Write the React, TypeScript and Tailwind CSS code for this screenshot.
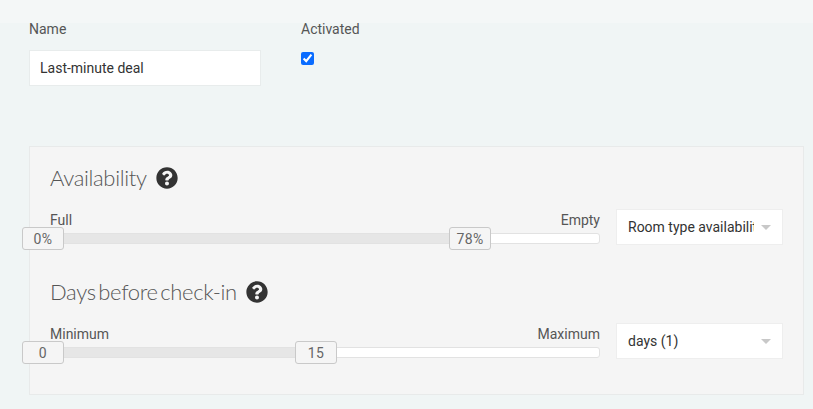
import { FaQuestionCircle } from "react-icons/fa";

const roboto = "font-['Roboto',sans-serif]";

function Handle({ label, left }: { label: string; left: number }) {
  return (
    <div
      className="absolute top-[-7px] flex h-[23px] w-[42px] items-center justify-center rounded-[3px] border border-[#c9c9c9] bg-[#f5f5f5] pt-[1px] text-[14px] tracking-[0.4px] text-[#666]"
      style={{ left }}
    >
      {label}
    </div>
  );
}

function SliderRow({
  title,
  min,
  max,
  from,
  to,
  toLeft,
  select,
}: {
  title: string;
  min: string;
  max: string;
  from: string;
  to: string;
  toLeft: number;
  select: string;
}) {
  return (
    <div>
      <div className="flex h-[24px] items-center gap-[9px]">
        <h3 className="font-['Lato',sans-serif] text-[22px] leading-none font-light tracking-[-0.35px] [word-spacing:-3px] text-[#555]">
          {title}
        </h3>
        <FaQuestionCircle className="h-[22px] w-[22px] text-[#333]" />
      </div>
      <div className="mt-[19px] flex">
        <div className="w-[550px]">
          <div className="flex h-[23px] items-center justify-between text-[14px] leading-[20px] text-[#555]">
            <span className="-mt-[1px]">{min}</span>
            <span className="-mt-[1px]">{max}</span>
          </div>
          <div className="relative mt-[1px] flex h-[11px] overflow-visible rounded-[3px] border border-[#e2e2e2] bg-white">
            <div className="h-full bg-[#e6e6e6]" style={{ width: toLeft + 21 }} />
            <Handle label={from} left={-29} />
            <Handle label={to} left={toLeft} />
          </div>
        </div>
        <div className="ml-[16px] flex h-[36px] w-[167px] items-center border border-[#eeeeee] bg-white pr-[11px] pl-[11px]">
          <span className="w-[126px] overflow-hidden text-[14px] whitespace-nowrap text-[#333]">{select}</span>
          <span className="ml-auto h-0 w-0 border-x-[5px] border-t-[5px] border-x-transparent border-t-[#c8c8c8]" />
        </div>
      </div>
    </div>
  );
}

export default function App() {
  return (
    <div className={`h-[409px] w-[813px] overflow-hidden bg-[#f0f5f5] ${roboto}`}>
      <div className="h-[23px] bg-[#f4f7f7]" />
      <div className="flex pl-[29px]">
        <div className="w-[272px]">
          <label className="block h-[19px] text-[14px] leading-[13px] text-[#555]">Name</label>
          <input
            readOnly
            value="Last-minute deal"
            className="mt-[8px] block h-[36px] w-[232px] border border-[#e8ecec] bg-white px-[10px] text-[14px] text-[#333] outline-none"
          />
        </div>
        <div>
          <label className="block h-[19px] text-[14px] leading-[13px] text-[#555]">Activated</label>
          <input type="checkbox" checked readOnly className="mt-[10px] block h-[13px] w-[13px] accent-[#0a6cff]" />
        </div>
      </div>
      <div className="mt-[60px] ml-[29px] h-[249px] w-[775px] border border-[#e8eaea] bg-[#f5f5f5] pt-[19px] pl-[20px]">
        <SliderRow
          title="Availability"
          min="Full"
          max="Empty"
          from="0%"
          to="78%"
          toLeft={398}
          select="Room type availability"
        />
        <div className="mt-[35px]">
          <SliderRow
            title="Days before check-in"
            min="Minimum"
            max="Maximum"
            from="0"
            to="15"
            toLeft={244}
            select="days (1)"
          />
        </div>
      </div>
    </div>
  );
}
